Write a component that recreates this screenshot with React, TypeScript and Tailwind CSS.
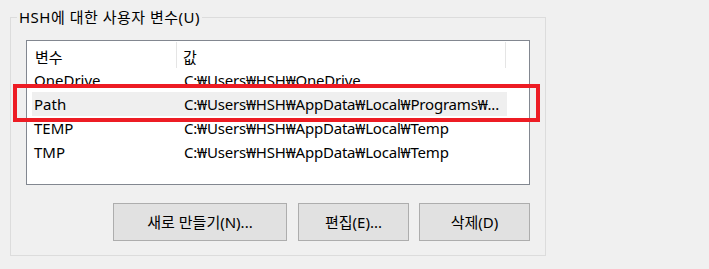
import React from 'react';

const rows = [
  { name: 'OneDrive', value: 'C:₩Users₩HSH₩OneDrive' },
  { name: 'Path', value: 'C:₩Users₩HSH₩AppData₩Local₩Programs₩...', selected: true },
  { name: 'TEMP', value: 'C:₩Users₩HSH₩AppData₩Local₩Temp' },
  { name: 'TMP', value: 'C:₩Users₩HSH₩AppData₩Local₩Temp' },
];

export default function App() {
  return (
    <div
      className="relative w-[709px] h-[269px] bg-[#f0f0f0] text-[15px] text-black pt-[6px] pl-[10px] overflow-hidden"
      style={{ fontFamily: '"Noto Sans", "Noto Sans CJK KR", sans-serif' }}
    >
      <fieldset className="w-[536px] h-[250px] border border-[#dcdcdc] px-[15px]">
        <legend className="ml-[-9px] px-[2px] h-[22px] leading-[22px] tracking-[0.5px]">HSH에 대한 사용자 변수(U)</legend>

        {/* 변수 목록 */}
        <div className="mt-[12px] w-[504px] h-[145px] bg-white border border-[#828790]">
          <div className="flex h-[27px] leading-[20px]">
            <div className="w-[150px] pl-[8px] pt-[5px] border-r border-[#e5e5e5] mt-[1px]">변수</div>
            <div className="w-[329px] pl-[6px] pt-[5px] border-r border-[#e5e5e5] mt-[1px]">값</div>
          </div>
          {rows.map(r => (
            <div
              key={r.name}
              className={`flex ml-[5px] w-[475px] h-[24px] leading-[24px] whitespace-nowrap ${r.selected ? 'bg-[#efefef]' : ''}`}
            >
              <div className="w-[146px] pl-[2px]">{r.name}</div>
              <div className="pl-[6px] tracking-[-0.2px]">{r.value}</div>
            </div>
          ))}
        </div>

        {/* 버튼 */}
        <div className="flex justify-end gap-[10px] mt-[18px] w-[504px]">
          <button className="w-[174px] h-[38px] bg-[#e1e1e1] border border-[#adadad] mr-[1px]">새로 만들기(N)...</button>
          <button className="w-[111px] h-[38px] bg-[#e1e1e1] border border-[#adadad]">편집(E)...</button>
          <button className="w-[111px] h-[38px] bg-[#e1e1e1] border border-[#adadad]">삭제(D)</button>
        </div>
      </fieldset>

      {/* 강조 표시 */}
      <div className="absolute left-[13px] top-[84px] w-[527px] h-[38px] border-[4px] border-[#ed1c24] pointer-events-none" />
    </div>
  );
}
